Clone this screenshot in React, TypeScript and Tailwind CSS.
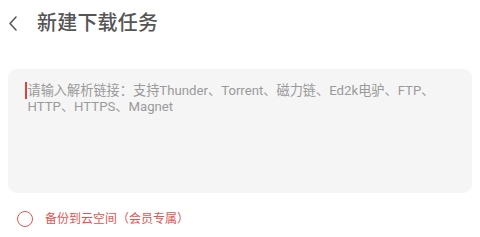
export default function App() {
  return (
    <div className="w-[480px] h-[237px] bg-white overflow-hidden" style={{ fontFamily: 'Roboto, "Noto Sans CJK SC", sans-serif' }}>
      <div className="flex items-center h-[46px] pl-[9px]">
        <svg width="8" height="15" viewBox="0 0 8 15" fill="none" className="text-[#555]">
          <polyline points="7,1 1,7.5 7,14" stroke="currentColor" strokeWidth="1.5" strokeLinecap="round" strokeLinejoin="round" />
        </svg>
        <h1 className="ml-[20px] text-[20px] font-medium text-[#555] tracking-[0.2px]">新建下载任务</h1>
      </div>
      <div className="mx-[8px] mt-[23px] h-[124px] rounded-[9px] bg-[#f5f5f5] pl-[17px] pt-[13px]">
        <div className="flex">
          <span className="h-[17px] w-[1.5px] bg-[#e0403a]" />
          <p className="ml-[1px] mt-[1px] text-[13.2px] leading-[16px] text-[#9a9a9a]">
            请输入解析链接：支持Thunder、Torrent、磁力链、Ed2k电驴、FTP、
            <br />
            HTTP、HTTPS、Magnet
          </p>
        </div>
      </div>
      <div className="flex items-center mt-[17px] pl-[17px]">
        <span className="size-[16px] rounded-full border-[1.5px] border-[#e05552]" />
        <span className="ml-[12px] text-[12px] text-[#e05552]">备份到云空间（会员专属）</span>
      </div>
    </div>
  )
}
